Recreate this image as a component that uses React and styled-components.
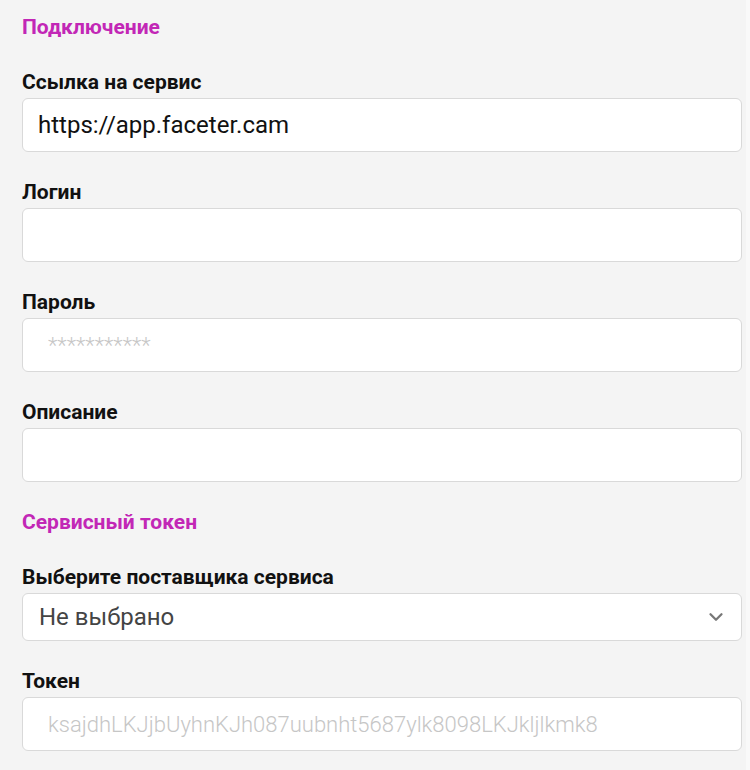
import React from "react";
import styled, { createGlobalStyle } from "styled-components";

const GlobalStyle = createGlobalStyle`
  html, body {
    margin: 0;
    padding: 0;
    background: #f4f4f4;
  }
  body {
    font-family: Roboto, "Noto Sans", "Liberation Sans", sans-serif;
  }
`;

const Page = styled.div`
  width: 750px;
  height: 770px;
  overflow: hidden;
  box-sizing: border-box;
  padding: 16px 4px 0 22px;
  background: #f4f4f4;
  border-right: 4px solid #f9f9f9;
`;

const SectionTitle = styled.h2`
  margin: 0 0 ${(p) => p.$gap}px;
  font-size: 21px;
  line-height: 22px;
  font-weight: 700;
  color: #c227b6;
`;

const Field = styled.div`
  display: flex;
  flex-direction: column;
  gap: 5px;
  margin-bottom: 29px;
`;

const Label = styled.label`
  font-size: 21px;
  line-height: 22px;
  font-weight: 700;
  color: #111;
`;

const Box = styled.div`
  position: relative;
  box-sizing: border-box;
  height: ${(p) => p.$h || 54}px;
  background: #fff;
  border: 1px solid #d9d9d9;
  border-radius: 6px;
  display: flex;
  align-items: center;
`;

const Input = styled.input`
  width: 100%;
  height: 100%;
  box-sizing: border-box;
  border: none;
  outline: none;
  background: transparent;
  padding: 0 0 0 ${(p) => p.$pad || 15}px;
  font-family: Roboto, "Noto Sans", sans-serif;
  font-size: 24px;
  color: #111;
  border-radius: 6px;

  &::placeholder {
    color: #c6c6c6;
    font-size: 22px;
    font-weight: 300;
  }
`;

const SelectValue = styled.div`
  flex: 1;
  padding-left: 16px;
  font-size: 24px;
  color: #444;
`;

const Chevron = styled.svg`
  width: 22px;
  height: 22px;
  margin-right: 14px;
  color: #777;
`;

export default function App() {
  return (
    <Page>
      <GlobalStyle />
      <SectionTitle $gap={33}>Подключение</SectionTitle>
      <Field>
        <Label>Ссылка на сервис</Label>
        <Box>
          <Input defaultValue="https://app.faceter.cam" />
        </Box>
      </Field>
      <Field>
        <Label>Логин</Label>
        <Box>
          <Input />
        </Box>
      </Field>
      <Field>
        <Label>Пароль</Label>
        <Box>
          <Input $pad={25} placeholder="***********" />
        </Box>
      </Field>
      <Field>
        <Label>Описание</Label>
        <Box>
          <Input />
        </Box>
      </Field>
      <SectionTitle $gap={33}>Сервисный токен</SectionTitle>
      <Field>
        <Label>Выберите поставщика сервиса</Label>
        <Box $h={48}>
          <SelectValue>Не выбрано</SelectValue>
          <Chevron viewBox="0 0 24 24" fill="none" stroke="currentColor" strokeWidth="2.5" strokeLinecap="round" strokeLinejoin="round">
            <path d="M6 9l6 6 6-6" />
          </Chevron>
        </Box>
      </Field>
      <Field>
        <Label>Токен</Label>
        <Box>
          <Input $pad={25} placeholder="ksajdhLKJjbUyhnKJh087uubnht5687ylk8098LKJkljlkmk8" />
        </Box>
      </Field>
    </Page>
  );
}
